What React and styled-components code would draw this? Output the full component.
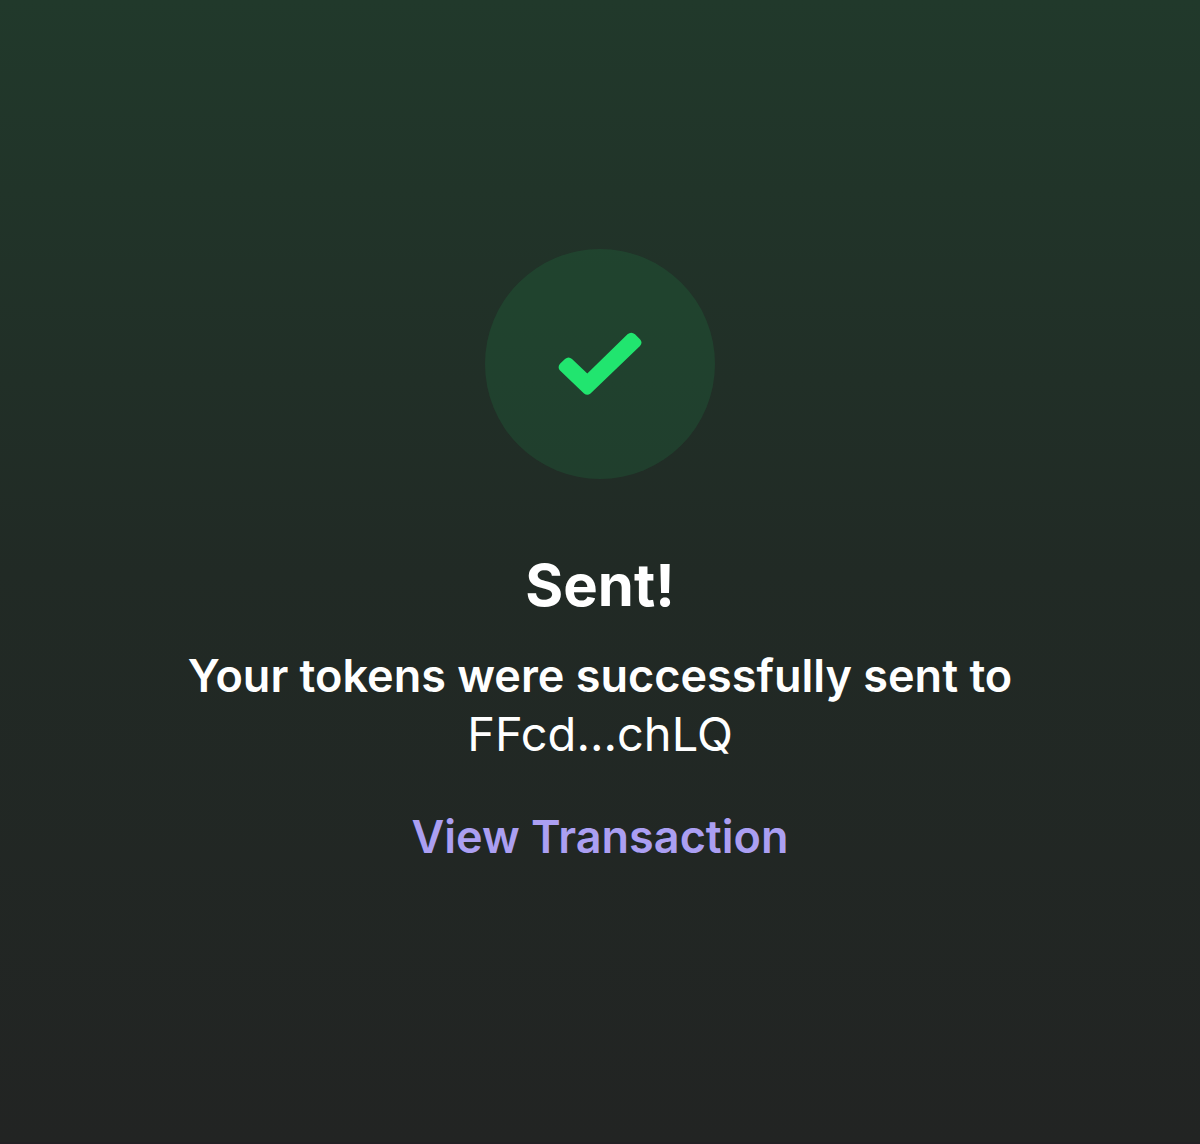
import React from "react";
import styled, { createGlobalStyle } from "styled-components";

const GlobalStyle = createGlobalStyle`
  body {
    margin: 0;
    background-color: #222423;
    font-family: Inter, "Liberation Sans", sans-serif;
  }
`;

const Main = styled.main`
  box-sizing: border-box;
  display: flex;
  flex-direction: column;
  align-items: center;
  justify-content: center;
  min-height: 100vh;
  padding: 0 40px 28px;
  border-bottom: 2px solid #222024;
  background: linear-gradient(#21392b 0%, #212a25 50%, #222423 100%);
  color: #fff;
  text-align: center;
`;

const IconCircle = styled.div`
  display: flex;
  align-items: center;
  justify-content: center;
  width: 230px;
  height: 230px;
  border-radius: 50%;
  background-color: rgba(33, 229, 111, 0.1);
`;

const CheckIcon = styled.svg`
  width: 84px;
  height: 64px;
  fill: #21e56f;
`;

const Title = styled.h1`
  margin: 70px 0 0;
  font-size: 58px;
  font-weight: 700;
  line-height: 72px;
`;

const Message = styled.p`
  margin: 26px 0 0;
  font-size: 45px;
  font-weight: 600;
  line-height: 58px;
`;

const Address = styled.span`
  display: block;
  font-size: 47px;
  font-weight: 400;
`;

const TransactionLink = styled.a`
  margin-top: 46px;
  color: #ab9ff2;
  font-size: 45px;
  font-weight: 600;
  line-height: 56px;
  text-decoration: none;

  &:hover {
    text-decoration: underline;
  }
`;

const App = () => {
  const recipient = "FFcd...chLQ";

  return (
    <>
      <GlobalStyle />
      <Main>
        <IconCircle>
          <CheckIcon viewBox="0 0 84 64" aria-hidden="true">
            <path d="M29.3 41.5 L69.5 2.2 Q73.2 -0.8 77 2.2 L82 7.2 Q85 10.6 82 14 L32.5 61.5 Q29.3 64.2 26 61.5 L2 38.5 Q-0.8 35.2 2 31.8 L7 27 Q10.5 24 14 27 Z" />
          </CheckIcon>
        </IconCircle>
        <Title>Sent!</Title>
        <Message>
          Your tokens were successfully sent to
          <Address>{recipient}</Address>
        </Message>
        <TransactionLink href="#transaction">View Transaction</TransactionLink>
      </Main>
    </>
  );
};

export default App;
